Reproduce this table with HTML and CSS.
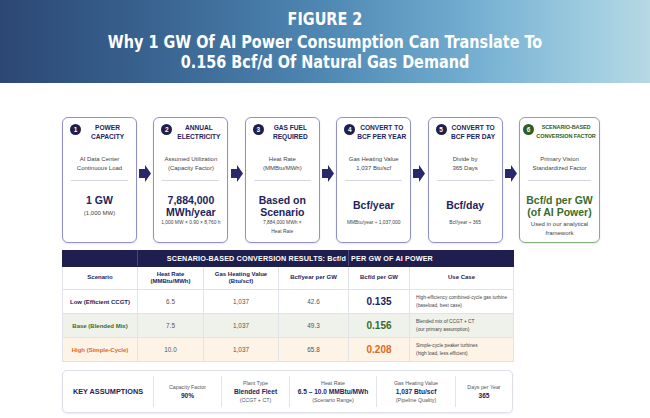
FILE: index.html
```html
<!DOCTYPE html>
<html>
<head>
<meta charset="utf-8">
<link rel="stylesheet" href="styles.css">
</head>
<body>
<header class="banner">
  <div class="fig"><span class="sq">FIGURE 2</span></div>
  <h1 class="title"><span class="sq">Why 1 GW Of AI Power Consumption Can Translate To<br>0.156 Bcf/d Of Natural Gas Demand</span></h1>
</header>
<main class="content">
  <div class="flow">
    <div class="step">
      <div class="step-head"><span class="badge">1</span><div class="step-title">POWER<br>CAPACITY</div></div>
      <div class="desc">AI Data Center<br>Continuous Load</div>
      <div class="rule"></div>
      <div class="val"><div class="big">1 GW</div><div class="sub">(1,000 MW)</div></div>
    </div>
    <div class="arrow"><svg width="12" height="17" viewBox="0 0 12 17"><path d="M0 4H6V0L12 8.5L6 17V13H0Z"/></svg></div>
    <div class="step">
      <div class="step-head"><span class="badge">2</span><div class="step-title">ANNUAL<br>ELECTRICITY</div></div>
      <div class="desc">Assumed Utilization<br>(Capacity Factor)</div>
      <div class="rule"></div>
      <div class="val"><div class="big">7,884,000<br>MWh/year</div><div class="tiny t1">1,000 MW × 0.90 × 8,760 h</div></div>
    </div>
    <div class="arrow"><svg width="12" height="17" viewBox="0 0 12 17"><path d="M0 4H6V0L12 8.5L6 17V13H0Z"/></svg></div>
    <div class="step">
      <div class="step-head"><span class="badge">3</span><div class="step-title">GAS FUEL<br>REQUIRED</div></div>
      <div class="desc">Heat Rate<br>(MMBtu/MWh)</div>
      <div class="rule"></div>
      <div class="val"><div class="big">Based on<br>Scenario</div><div class="tiny t0">7,884,000 MWh ×<br>Heat Rate</div></div>
    </div>
    <div class="arrow"><svg width="12" height="17" viewBox="0 0 12 17"><path d="M0 4H6V0L12 8.5L6 17V13H0Z"/></svg></div>
    <div class="step">
      <div class="step-head"><span class="badge">4</span><div class="step-title">CONVERT TO<br>BCF PER YEAR</div></div>
      <div class="desc">Gas Heating Value<br>1,037 Btu/scf</div>
      <div class="rule"></div>
      <div class="val low-val"><div class="big">Bcf/year</div><div class="tiny gap">MMBtu/year ÷ 1,037,000</div></div>
    </div>
    <div class="arrow"><svg width="12" height="17" viewBox="0 0 12 17"><path d="M0 4H6V0L12 8.5L6 17V13H0Z"/></svg></div>
    <div class="step">
      <div class="step-head"><span class="badge">5</span><div class="step-title">CONVERT TO<br>BCF PER DAY</div></div>
      <div class="desc">Divide by<br>365 Days</div>
      <div class="rule"></div>
      <div class="val low-val"><div class="big">Bcf/day</div><div class="tiny gap">Bcf/year ÷ 365</div></div>
    </div>
    <div class="arrow"><svg width="12" height="17" viewBox="0 0 12 17"><path d="M0 4H6V0L12 8.5L6 17V13H0Z"/></svg></div>
    <div class="step green">
      <div class="step-head"><span class="badge">6</span><div class="step-title">SCENARIO-BASED<br>CONVERSION FACTOR</div></div>
      <div class="desc">Primary Vision<br>Standardized Factor</div>
      <div class="rule"></div>
      <div class="val"><div class="big">Bcf/d per GW<br>(of AI Power)</div><div class="sub note">Used in our analytical<br>framework</div></div>
    </div>
  </div>

  <table class="results">
    <colgroup><col class="c1"><col class="c2"><col class="c3"><col class="c4"><col class="c5"><col class="c6"></colgroup>
    <tr class="band"><th class="band-l"></th><th colspan="3" class="band-t">SCENARIO-BASED CONVERSION RESULTS: Bcf/d</th><th colspan="2" class="band-t2">PER GW OF AI POWER</th></tr>
    <tr class="hrow"><th>Scenario</th><th>Heat Rate<br>(MMBtu/MWh)</th><th>Gas Heating Value<br>(Btu/scf)</th><th>Bcf/year per GW</th><th>Bcf/d per GW</th><th>Use Case</th></tr>
    <tr class="r low"><td class="name">Low (Efficient CCGT)</td><td>6.5</td><td>1,037</td><td>42.6</td><td class="num">0.135</td><td class="use">High-efficiency combined-cycle gas turbine<br>(baseload, best case)</td></tr>
    <tr class="r base"><td class="name">Base (Blended Mix)</td><td>7.5</td><td>1,037</td><td>49.3</td><td class="num">0.156</td><td class="use">Blended mix of CCGT + CT<br>(our primary assumption)</td></tr>
    <tr class="r high"><td class="name">High (Simple-Cycle)</td><td>10.0</td><td>1,037</td><td>65.8</td><td class="num">0.208</td><td class="use">Simple-cycle peaker turbines<br>(high load, less efficient)</td></tr>
  </table>

  <div class="assume">
    <div class="a-cell a-key">KEY ASSUMPTIONS</div>
    <div class="a-cell a2"><div class="lab">Capacity Factor</div><div class="v">90%</div></div>
    <div class="a-cell a3"><div class="lab">Plant Type</div><div class="v">Blended Fleet</div><div class="lab">(CCGT + CT)</div></div>
    <div class="a-cell a4"><div class="lab">Heat Rate</div><div class="v">6.5 – 10.0 MMBtu/MWh</div><div class="lab">(Scenario Range)</div></div>
    <div class="a-cell a5"><div class="lab">Gas Heating Value</div><div class="v">1,037 Btu/scf</div><div class="lab">(Pipeline Quality)</div></div>
    <div class="a-cell a6"><div class="lab">Days per Year</div><div class="v">365</div></div>
  </div>
</main>
</body>
</html>
```
FILE: styles.css
```css
html, body {
  margin: 0;
  padding: 0;
  background: #ffffff;
}
body {
  width: 650px;
  height: 418px;
  overflow: hidden;
  font-family: "Liberation Sans", Arial, sans-serif;
  color: #222;
}
.banner {
  height: 83px;
  box-sizing: border-box;
  padding-top: 9px;
  background: linear-gradient(90deg, #2c4774 0%, #3a6592 25%, #4f88b3 50%, #72add0 72%, #98c8de 88%, #b6d9e4 100%);
  color: #ffffff;
  text-align: center;
  font-family: "DejaVu Sans Condensed", "Liberation Sans", sans-serif;
  font-weight: 700;
}
.sq {
  display: inline-block;
  transform: scaleX(0.89);
}
.fig {
  font-size: 18px;
  line-height: 20px;
}
.title {
  margin: 3px 0 0;
  font-size: 18px;
  line-height: 20px;
  font-weight: 700;
}
.content {
  padding: 34px 0 0 62px;
}
.flow {
  display: flex;
  width: 538px;
  height: 126px;
}
.step {
  flex: 0 0 75px;
  height: 126px;
  box-sizing: border-box;
  border: 1.5px solid #9191c9;
  border-radius: 6px;
  display: flex;
  flex-direction: column;
  background: #fff;
  box-shadow: 0 1px 2px rgba(60, 60, 110, 0.12);
}
.arrow {
  flex: 1;
  display: flex;
  justify-content: center;
  padding-top: 48px;
}
.arrow svg {
  fill: #28286a;
}
.step-head {
  display: flex;
  align-items: flex-start;
  height: 24px;
  padding: 5px 2px 0 7px;
}
.badge {
  flex: none;
  width: 11px;
  height: 11px;
  margin-top: 1px;
  border-radius: 50%;
  background: #1f1f4d;
  color: #fff;
  font-size: 6.5px;
  font-weight: 700;
  display: flex;
  align-items: center;
  justify-content: center;
}
.step-title {
  flex: 1;
  text-align: center;
  font-size: 6.6px;
  line-height: 9px;
  font-weight: 700;
  color: #24245c;
}
.desc {
  margin-top: 8px;
  height: 18px;
  text-align: center;
  font-size: 6px;
  line-height: 9px;
  color: #444;
}
.rule {
  margin: 7px 8px 0;
  height: 1px;
  background: #d3d7e3;
}
.val {
  flex: 1;
  display: flex;
  flex-direction: column;
  justify-content: flex-start;
  align-items: center;
  text-align: center;
  padding-top: 13px;
}
.val.low-val {
  padding-top: 18px;
}
.big {
  font-size: 10.5px;
  line-height: 12px;
  font-weight: 700;
  color: #23235b;
}
.sub {
  margin-top: 3px;
  font-size: 6px;
  line-height: 9px;
  color: #444;
}
.tiny {
  margin-top: 1px;
  font-size: 4.9px;
  line-height: 8px;
  color: #444;
}
.tiny.t0 {
  margin-top: 0;
  line-height: 9px;
}
.tiny.gap {
  margin-top: 8px;
}
.step.green {
  flex-basis: 81px;
  border-color: #84af78;
}
.step.green .step-head {
  padding: 5px 1px 0 3px;
}
.step.green .badge {
  background: #2f5e25;
}
.step.green .step-title {
  font-size: 5.5px;
  line-height: 8.5px;
  color: #2f5e25;
  white-space: nowrap;
  letter-spacing: -0.1px;
}
.step.green .big {
  color: #3a6b2c;
}
.step.green .note {
  margin-top: 2px;
}

.results {
  margin-top: 7px;
  width: 451px;
  border-collapse: collapse;
  table-layout: fixed;
  border: 1px solid #dfe2e8;
}
.c1 { width: 75px; }
.c2 { width: 66px; }
.c3 { width: 75px; }
.c4 { width: 70px; }
.c5 { width: 61px; }
.c6 { width: 104px; }
.results th, .results td {
  border: 1px solid #e0e3e9;
  padding: 0;
  text-align: center;
}
.band th {
  height: 15px;
  background: #1f1f4f;
  border-color: #1f1f4f;
  color: #fff;
  font-size: 7.2px;
  font-weight: 700;
  letter-spacing: 0.15px;
}
.band .band-l {
  border-right: 1px solid #4a4a78;
}
.band .band-t {
  text-align: right;
  padding-right: 2px;
  border-right: 1px solid #4a4a78;
}
.band .band-t2 {
  text-align: left;
  padding-left: 2px;
}
.hrow th {
  height: 22px;
  font-size: 6px;
  line-height: 7.5px;
  font-weight: 700;
  color: #23235b;
  background: #fff;
}
.r td {
  height: 23px;
  font-size: 6.4px;
  color: #555;
}
.r td.name {
  font-weight: 700;
  font-size: 6px;
}
.r td.num {
  font-size: 10px;
  font-weight: 700;
}
.r td.use {
  text-align: left;
  padding-left: 6px;
  font-size: 4.8px;
  line-height: 7.5px;
  color: #444;
}
.low td.name, .low td.num { color: #23235b; }
.base { background: #eef2ea; }
.base td.name, .base td.num { color: #3b6b2b; }
.high { background: #fdf3e6; }
.high td.name, .high td.num { color: #e0691f; }

.assume {
  margin-top: 8px;
  width: 451px;
  height: 43px;
  box-sizing: border-box;
  border: 1px solid #dde0e8;
  border-radius: 5px;
  display: flex;
  box-shadow: 0 1px 2px rgba(60, 60, 110, 0.1);
}
.a-cell {
  display: flex;
  flex-direction: column;
  justify-content: center;
  align-items: center;
  text-align: center;
  margin: 5px 0;
  border-left: 1px solid #e2e4ea;
}
.a-key {
  flex: 0 0 90px;
  border-left: none;
  font-size: 7.3px;
  font-weight: 700;
  color: #23235b;
}
.a2 { flex: 0 0 67px; }
.a3 { flex: 0 0 67px; }
.a4 { flex: 0 0 86px; }
.a5 { flex: 0 0 78px; }
.a6 { flex: 1; }
.lab {
  font-size: 5.3px;
  line-height: 8.5px;
  color: #555;
}
.v {
  font-size: 6.6px;
  line-height: 9px;
  font-weight: 700;
  color: #23235b;
}
```
